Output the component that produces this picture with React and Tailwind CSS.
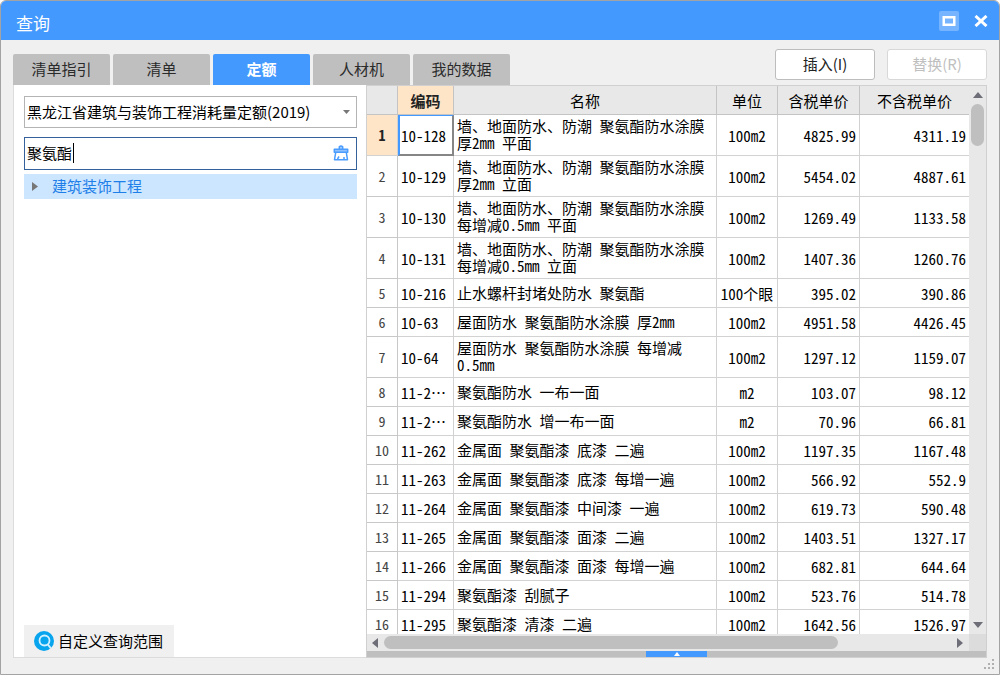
import React from "react";

const rows = [
  ["10-128", "墙、地面防水、防潮 聚氨酯防水涂膜 厚2mm 平面", "100m2", "4825.99", "4311.19"],
  ["10-129", "墙、地面防水、防潮 聚氨酯防水涂膜 厚2mm 立面", "100m2", "5454.02", "4887.61"],
  ["10-130", "墙、地面防水、防潮 聚氨酯防水涂膜 每增减0.5mm 平面", "100m2", "1269.49", "1133.58"],
  ["10-131", "墙、地面防水、防潮 聚氨酯防水涂膜 每增减0.5mm 立面", "100m2", "1407.36", "1260.76"],
  ["10-216", "止水螺杆封堵处防水 聚氨酯", "100个眼", "395.02", "390.86"],
  ["10-63", "屋面防水 聚氨酯防水涂膜 厚2mm", "100m2", "4951.58", "4426.45"],
  ["10-64", "屋面防水 聚氨酯防水涂膜 每增减0.5mm", "100m2", "1297.12", "1159.07"],
  ["11-2…", "聚氨酯防水 一布一面", "m2", "103.07", "98.12"],
  ["11-2…", "聚氨酯防水 增一布一面", "m2", "70.96", "66.81"],
  ["11-262", "金属面 聚氨酯漆 底漆 二遍", "100m2", "1197.35", "1167.48"],
  ["11-263", "金属面 聚氨酯漆 底漆 每增一遍", "100m2", "566.92", "552.9"],
  ["11-264", "金属面 聚氨酯漆 中间漆 一遍", "100m2", "619.73", "590.48"],
  ["11-265", "金属面 聚氨酯漆 面漆 二遍", "100m2", "1403.51", "1327.17"],
  ["11-266", "金属面 聚氨酯漆 面漆 每增一遍", "100m2", "682.81", "644.64"],
  ["11-294", "聚氨酯漆 刮腻子", "100m2", "523.76", "514.78"],
  ["11-295", "聚氨酯漆 清漆 二遍", "100m2", "1642.56", "1526.97"],
];

const tabs = ["清单指引", "清单", "定额", "人材机", "我的数据"];

function TitleBar() {
  return (
    <header className="flex h-[39px] shrink-0 items-center bg-[#4499ff] pl-[15px] pr-2 pt-1">
      <h1 className="flex-1 text-[17px] leading-6 text-white">查询</h1>
      <div className="flex items-center gap-3 pb-1">
        <button type="button" aria-label="最大化" className="flex size-5 items-center justify-center rounded-xs bg-[#76b4ff]">
          <svg width="14" height="12" viewBox="0 0 14 12" fill="none" stroke="#fff" strokeWidth="2.5">
            <rect x="1.75" y="2.25" width="10.5" height="7.5" />
          </svg>
        </button>
        <button type="button" aria-label="关闭" className="flex size-5 items-center justify-center">
          <svg width="14" height="12" viewBox="0 0 14 12" fill="none" stroke="#fff" strokeWidth="3">
            <path d="M1.5 1 12.5 11M12.5 1 1.5 11" />
          </svg>
        </button>
      </div>
    </header>
  );
}

function Toolbar() {
  return (
    <div className="flex h-[45px] shrink-0 items-end justify-between">
      <div role="tablist" className="flex gap-[3px]">
        {tabs.map((t) => (
          <button
            key={t}
            type="button"
            role="tab"
            aria-selected={t === "定额"}
            className={
              t === "定额"
                ? "h-[31px] w-[97px] rounded-t-xs bg-[#4499ff] text-[15px] font-bold text-white"
                : "h-[31px] w-[97px] rounded-t-xs bg-[#bfbfbf] text-[15px] text-[#2b2b2b]"
            }
          >
            {t}
          </button>
        ))}
      </div>
      <div className="flex gap-3 pb-[5px]">
        <button type="button" className="h-[31px] w-[100px] rounded-[3px] border border-[#bdbdbd] bg-white text-[15px] text-[#222]">
          插入(I)
        </button>
        <button type="button" disabled className="h-[31px] w-[100px] rounded-[3px] border border-[#d8d8d8] bg-white text-[15px] text-[#bfbfbf]">
          替换(R)
        </button>
      </div>
    </div>
  );
}

function SidePanel() {
  return (
    <aside className="flex w-[353px] shrink-0 flex-col border-b border-l border-[#dcdcdc] bg-white pl-[10px] pr-[9px] pt-[11px]">
      <div className="relative">
        <select aria-label="定额库" className="h-8 w-full appearance-none border border-[#b4b4b4] bg-white pl-[2px] pr-6 text-[15px] text-black">
          <option>黑龙江省建筑与装饰工程消耗量定额(2019)</option>
        </select>
        <svg className="pointer-events-none absolute right-[7px] top-[14px]" width="7" height="4" viewBox="0 0 7 4" fill="#777">
          <path d="M0 0H7L3.5 4Z" />
        </svg>
      </div>
      <div className="relative mt-[9px]">
        <input aria-label="搜索" defaultValue="聚氨酯" className="h-[33px] w-full border border-[#34609c] bg-white pb-[2px] pl-[2px] pr-8 text-[15px] text-black outline-none" />
        <span className="absolute left-[49px] top-[6px] h-5 w-px bg-black" />
        <button type="button" aria-label="清除" className="absolute right-2 top-[8px]">
          <svg width="16" height="16" viewBox="0 0 16 16" fill="none" stroke="#4a9cff" strokeWidth="1.5" strokeLinejoin="round">
            <path d="M6.3 4V1.8Q8 0 9.7 1.8V4" fill="#a8d0ff" />
            <path d="M1.3 4.2H14.7V7.3H1.3Z" fill="#8cc0ff" />
            <path d="M2.7 7.5 1.5 14.7H14.5L13.3 7.500M4.500 14 6 11.500M11 12V14" />
          </svg>
        </button>
      </div>
      <a href="#tree" className="mt-1 flex h-[25px] items-center bg-[#cce6ff] pl-2 text-[15px] text-[#1f7fe8]">
        <svg width="6" height="9" viewBox="0 0 6 9" fill="#777">
          <path d="M0 0 6 4.500 0 9Z" />
        </svg>
        <span className="ml-[14px]">建筑装饰工程</span>
      </a>
      <button type="button" className="mt-auto flex h-8 w-[150px] items-center gap-1 bg-[#f0f0f0] pl-[10px] text-[15px] text-black">
        <svg width="20" height="20" viewBox="0 0 20 20" fill="none">
          <circle cx="10" cy="10" r="10" fill="#08a5ee" />
          <circle cx="10.500" cy="9.500" r="5" stroke="#d4f1ff" strokeWidth="1.800" />
          <path d="M13.500 13 17 17.500" stroke="#d4f1ff" strokeWidth="2" />
        </svg>
        自定义查询范围
      </button>
    </aside>
  );
}

const head = "h-[29px] border-b border-r border-[#c4c4c4] font-normal";

function ResultTable() {
  return (
    <table className="w-full table-fixed border-separate border-spacing-0 bg-white font-['Noto_Sans_Mono_CJK_SC','Noto_Sans_CJK_SC',monospace] text-[15px] leading-[17px] text-black">
      <colgroup>
        <col className="w-[31px]" />
        <col className="w-14" />
        <col />
        <col className="w-[61px]" />
        <col className="w-[82px]" />
        <col className="w-[109px]" />
      </colgroup>
      <thead>
        <tr className="bg-[#e8e8e8]">
          <th className={head}></th>
          <th className="h-[29px] border-b border-r border-[#c4c4c4] bg-[#ffe5c8] font-bold text-[#222]">编码</th>
          <th className={head}>名称</th>
          <th className={head}>单位</th>
          <th className={head}>含税单价</th>
          <th className="h-[29px] border-b border-[#c4c4c4] font-normal">不含税单价</th>
        </tr>
      </thead>
      <tbody>
        {rows.map(([code, name, unit, taxed, untaxed], i) => (
          <tr key={i} className="h-[29px]">
            <th
              scope="row"
              className={
                i === 0
                  ? "border-b border-r border-[#d2d2d2] bg-[#ffe5c8] text-[14px] font-bold text-[#222]"
                  : "border-b border-r border-[#c8c8c8] text-[14px] font-normal text-[#444]"
              }
            >
              {i + 1}
            </th>
            <td
              className={
                i === 0
                  ? "border-2 border-t border-b-[#868686] border-l-[#4499ff] border-r-[#868686] border-t-[#4499ff] pl-px"
                  : "border-b border-r border-[#d2d2d2] pl-[3px]"
              }
            >
              {code}
            </td>
            <td className="border-b border-r border-[#d2d2d2] px-[3px] pb-[4px] pt-[2px]">{name}</td>
            <td className="border-b border-r border-[#d2d2d2] text-center">{unit}</td>
            <td className="border-b border-r border-[#d2d2d2] pr-[3px] text-right">{taxed}</td>
            <td className="border-b border-[#d2d2d2] pr-[3px] text-right">{untaxed}</td>
          </tr>
        ))}
      </tbody>
    </table>
  );
}

function ResultPanel() {
  return (
    <section className="flex min-w-0 flex-1 flex-col border border-[#d0d0d0] bg-white">
      <div className="flex min-h-0 flex-1">
        <div className="flex min-w-0 flex-1 flex-col">
          <div className="min-h-0 flex-1 overflow-hidden"><ResultTable /></div>
          <div className="flex h-[17px] shrink-0 items-center justify-between bg-[#e8e8e8] pl-[5px] pr-[6px]">
            <svg width="6" height="10" viewBox="0 0 6 10" fill="#6e6e78"><path d="M6 0V10L0 5Z" /></svg>
            <div className="mx-[6px] flex-1"><div className="h-[13px] w-4/5 rounded-full bg-[#bfbfbf]" /></div>
            <svg width="6" height="10" viewBox="0 0 6 10" fill="#6e6e78"><path d="M0 0V10L6 5Z" /></svg>
          </div>
        </div>
        <div className="flex w-[17px] shrink-0 flex-col items-center bg-[#e8e8e8] pt-[6px]">
          <svg width="10" height="6" viewBox="0 0 10 6" fill="#6e6e78"><path d="M0 6H10L5 0Z" /></svg>
          <div className="mt-[6px] h-[42px] w-[13px] rounded-full bg-[#bfbfbf]" />
          <svg className="mb-[6px] mt-auto" width="10" height="6" viewBox="0 0 10 6" fill="#6e6e78"><path d="M0 0H10L5 6Z" /></svg>
          <div className="h-[17px] w-full bg-[#dcdcdc]" />
        </div>
      </div>
      <div className="flex h-[6px] shrink-0 justify-center bg-[#bfbfbf]">
        <button type="button" aria-label="展开" className="flex w-[61px] items-center justify-center bg-[#4499ff]">
          <svg width="6" height="4" viewBox="0 0 6 4" fill="#fff"><path d="M0 4H6L3 0Z" /></svg>
        </button>
      </div>
    </section>
  );
}

export default function App() {
  return (
    <div className="h-screen bg-white font-['Noto_Sans_CJK_SC',sans-serif]" lang="zh-CN">
      <div className="relative flex h-full flex-col overflow-hidden rounded-t-md border border-[#a3a3a3] bg-[#f0f0f0]">
        <TitleBar />
        <div className="flex min-h-0 flex-1 flex-col px-3 pb-4">
          <Toolbar />
          <main className="flex min-h-0 flex-1">
            <SidePanel />
            <ResultPanel />
          </main>
        </div>
        <svg className="absolute bottom-1 right-1" width="11" height="11" viewBox="0 0 11 11" fill="#b0b0b0">
          <path d="M8 0h2v2h-2zM4 4h2v2h-2zM8 4h2v2h-2zM0 8h2v2h-2zM4 8h2v2h-2zM8 8h2v2h-2z" />
        </svg>
      </div>
    </div>
  );
}
